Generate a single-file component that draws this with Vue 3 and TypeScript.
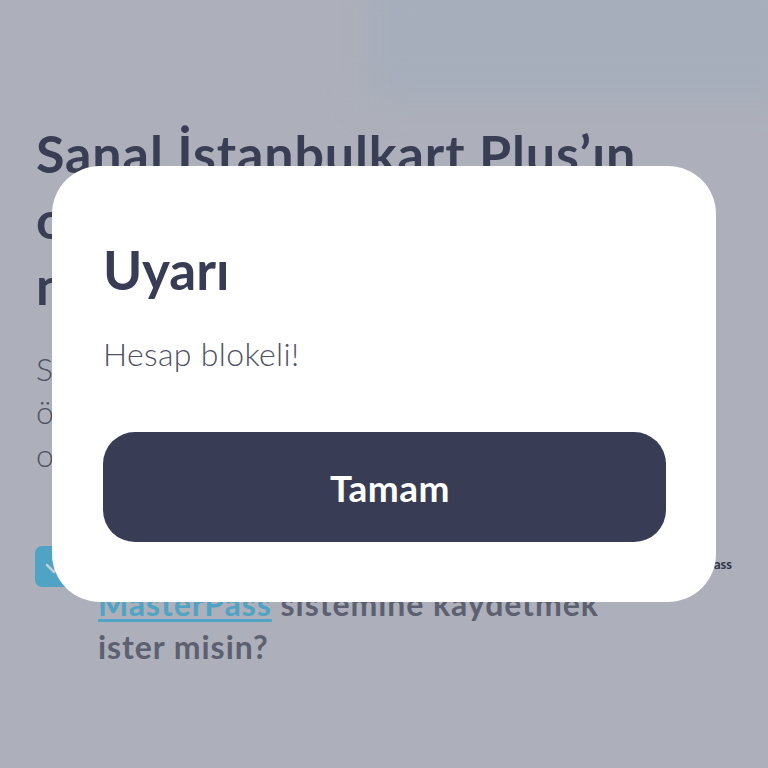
<script setup lang="ts">
const titleLines: string[] = ["Sanal İstanbulkart Plus’ın", "online işlemlerini", "nasıl yapabilirsin?"];
const bodyLines: string[] = ["Sanal kartını kullanarak", "ödemelerini hızlıca", "online yapabilirsin"];
</script>

<template>
  <div class="page">
    <div class="haze"></div>
    <main class="content">
      <h1 class="headline">
        <span v-for="line in titleLines" :key="line" class="headline-line">{{ line }}</span>
      </h1>
      <p class="body">
        <span v-for="line in bodyLines" :key="line" class="body-line">{{ line }}</span>
      </p>
      <div class="consent">
        <div class="check">
          <svg viewBox="0 0 40 40" width="40" height="40" aria-hidden="true">
            <path d="M12 19l7 7 12-14" fill="none" stroke="#c3cbd6" stroke-width="2.5" stroke-linecap="round" stroke-linejoin="round" />
          </svg>
        </div>
        <p class="consent-text">
          <span class="consent-first">Kartlarını</span>
          <span><a class="link">MasterPass</a> sistemine kaydetmek</span>
          <span>ister misin?</span>
        </p>
        <span class="brand">masterpass</span>
      </div>
    </main>

    <section class="modal" role="dialog">
      <h2 class="modal-title">Uyarı</h2>
      <p class="modal-text">Hesap blokeli!</p>
      <button class="modal-button" type="button">Tamam</button>
    </section>
  </div>
</template>

<style>
html, body { margin: 0; padding: 0; }
</style>

<style scoped>
.page {
  position: relative;
  width: 768px;
  height: 768px;
  overflow: hidden;
  background: #adb0ba;
  font-family: Lato, "Open Sans", sans-serif;
}
.haze {
  position: absolute;
  top: -30px;
  left: 365px;
  width: 440px;
  height: 130px;
  background: #a6aebb;
  filter: blur(18px);
}
.content {
  position: relative;
  padding: 120px 36px 0;
  display: flex;
  flex-direction: column;
}
.headline {
  margin: 0;
  display: flex;
  flex-direction: column;
  font-size: 52px;
  line-height: 66px;
  letter-spacing: 0.9px;
  font-weight: 700;
  color: #3a3e55;
  white-space: nowrap;
}
.body {
  margin: 29px 0 0;
  display: flex;
  flex-direction: column;
  font-size: 32px;
  line-height: 43px;
  letter-spacing: 0.35px;
  font-weight: 300;
  color: #4f5264;
  white-space: nowrap;
}
.consent {
  margin-top: 70px;
  display: flex;
  align-items: flex-start;
  gap: 22px;
}
.check {
  flex: none;
  width: 41px;
  height: 41px;
  margin-left: -1px;
  border-radius: 7px;
  background: #4fa3c4;
}
.consent-text {
  margin: -7px 0 0;
  display: flex;
  flex-direction: column;
  font-size: 32px;
  line-height: 43px;
  letter-spacing: 0.95px;
  font-weight: 700;
  color: #5d6070;
  white-space: nowrap;
}
.consent-first {
  height: 43px;
}
.link {
  color: #4fa3c4;
  text-decoration: underline;
  text-underline-offset: 3px;
}
.brand {
  position: absolute;
  top: 557px;
  right: 36px;
  font-size: 13px;
  line-height: 14px;
  font-weight: 700;
  color: #2f3245;
}
.modal {
  position: absolute;
  left: 52px;
  top: 166px;
  width: 664px;
  height: 436px;
  box-sizing: border-box;
  padding: 74px 50px 0 51px;
  background: #fff;
  border-radius: 48px;
  display: flex;
  flex-direction: column;
}
.modal-title {
  margin: 0;
  font-size: 53px;
  line-height: 60px;
  font-weight: 700;
  color: #383c54;
}
.modal-text {
  margin: 34px 0 0;
  font-size: 32px;
  line-height: 40px;
  letter-spacing: 0.35px;
  font-weight: 300;
  color: #4f5264;
}
.modal-button {
  margin-top: 58px;
  height: 110px;
  padding: 0 0 0 11px;
  border: 0;
  border-radius: 32px;
  background: #383c54;
  color: #fff;
  font-family: inherit;
  font-size: 37px;
  letter-spacing: 0.5px;
  font-weight: 700;
}
</style>
